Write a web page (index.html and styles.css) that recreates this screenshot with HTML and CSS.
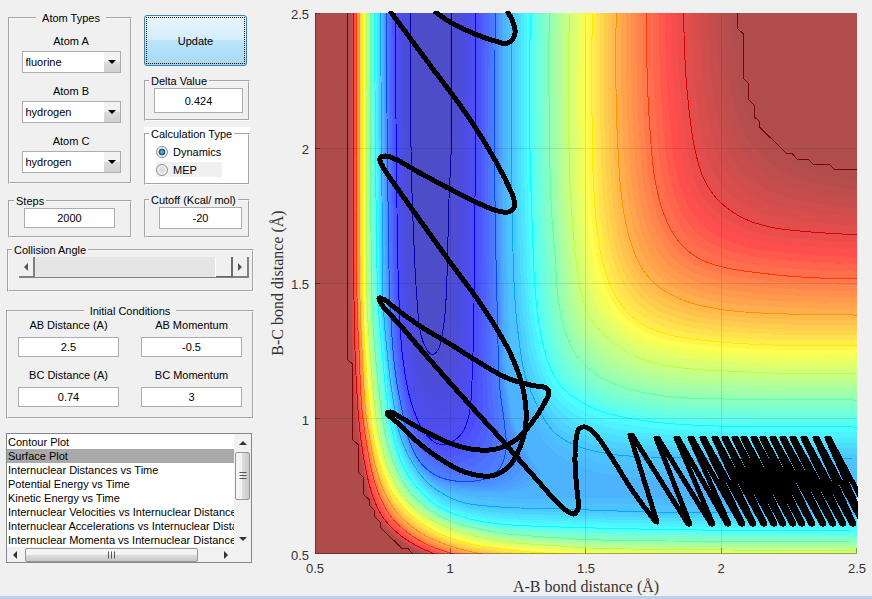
FILE: index.html
```
<!DOCTYPE html>
<html lang="en">
<head>
<meta charset="utf-8">
<title>Reaction Dynamics</title>
<link rel="stylesheet" href="styles.css">
</head>
<body>
<main class="app">
  <form class="controls" onsubmit="return false">
    <div class="top">
      <div class="col">
        <fieldset class="panel atoms">
          <legend class="centered">Atom Types</legend>
          <div class="field">
            <label for="atom-a">Atom A</label>
            <span class="combo"><select id="atom-a"><option>fluorine</option><option>hydrogen</option></select><svg viewBox="0 0 16 20"><path d="M4 8h8l-4 4z"/></svg></span>
          </div>
          <div class="field">
            <label for="atom-b">Atom B</label>
            <span class="combo"><select id="atom-b"><option>hydrogen</option><option>fluorine</option></select><svg viewBox="0 0 16 20"><path d="M4 8h8l-4 4z"/></svg></span>
          </div>
          <div class="field">
            <label for="atom-c">Atom C</label>
            <span class="combo"><select id="atom-c"><option>hydrogen</option><option>fluorine</option></select><svg viewBox="0 0 16 20"><path d="M4 8h8l-4 4z"/></svg></span>
          </div>
        </fieldset>
        <fieldset class="panel steps">
          <legend id="l-steps">Steps</legend>
          <input type="text" value="2000" aria-labelledby="l-steps">
        </fieldset>
      </div>
      <div class="col second">
        <button class="update" type="submit"><span>Update</span></button>
        <fieldset class="panel delta">
          <legend id="l-delta">Delta Value</legend>
          <input type="text" value="0.424" aria-labelledby="l-delta">
        </fieldset>
        <div class="white">
          <fieldset class="panel calc">
            <legend>Calculation Type</legend>
            <label class="radio"><input type="radio" name="calc" checked>Dynamics</label>
            <label class="radio shaded"><input type="radio" name="calc">MEP</label>
          </fieldset>
        </div>
        <fieldset class="panel cutoff">
          <legend id="l-cutoff">Cutoff (Kcal/ mol)</legend>
          <input type="text" value="-20" aria-labelledby="l-cutoff">
        </fieldset>
      </div>
    </div>
    <fieldset class="panel angle">
      <legend id="l-angle">Collision Angle</legend>
      <div class="slider">
        <button type="button" aria-label="Decrease angle"><svg viewBox="0 0 4 8"><path d="M4 0v8L0 4z"/></svg></button>
        <input type="range" min="0" max="180" value="180" aria-labelledby="l-angle">
        <button type="button" aria-label="Increase angle"><svg viewBox="0 0 4 8"><path d="M0 0v8l4-4z"/></svg></button>
      </div>
    </fieldset>
    <fieldset class="panel initial">
      <legend class="centered">Initial Conditions</legend>
      <div class="field"><label for="ab-d">AB Distance (A)</label><input id="ab-d" type="text" value="2.5"></div>
      <div class="field"><label for="ab-m">AB Momentum</label><input id="ab-m" type="text" value="-0.5"></div>
      <div class="field"><label for="bc-d">BC Distance (A)</label><input id="bc-d" type="text" value="0.74"></div>
      <div class="field"><label for="bc-m">BC Momentum</label><input id="bc-m" type="text" value="3"></div>
    </fieldset>
    <div class="list">
      <select size="8" aria-label="Plot type">
        <option>Contour Plot</option>
        <option selected>Surface Plot</option>
        <option>Internuclear Distances vs Time</option>
        <option>Potential Energy vs Time</option>
        <option>Kinetic Energy vs Time</option>
        <option>Internuclear Velocities vs Internuclear Distance</option>
        <option>Internuclear Accelerations vs Internuclear Distance</option>
        <option>Internuclear Momenta vs Internuclear Distance</option>
      </select>
      <div class="bar vertical">
        <svg class="arrow" viewBox="0 0 8 4"><path d="M4 0l4 4H0z"/></svg>
        <div class="thumb"><svg viewBox="0 0 7 8"><path d="M0 .5h7M0 3.5h7M0 6.5h7"/></svg></div>
        <svg class="arrow end" viewBox="0 0 8 4"><path d="M0 0h8L4 4z"/></svg>
      </div>
      <div class="bar horizontal">
        <svg class="arrow" viewBox="0 0 4 8"><path d="M4 0v8L0 4z"/></svg>
        <div class="thumb"><svg viewBox="0 0 8 7"><path d="M.5 0v7M3.5 0v7M6.5 0v7"/></svg></div>
        <svg class="arrow end" viewBox="0 0 4 8"><path d="M0 0v8l4-4z"/></svg>
      </div>
    </div>
  </form>
  <figure class="plot">
    <svg viewBox="262 0 610 596" role="img" aria-label="Potential energy surface with trajectory">
      <defs>
        <clipPath id="area"><rect x="315" y="13" width="542" height="541"/></clipPath>
        <clipPath id="track"><rect x="315" y="11" width="543" height="543"/></clipPath>
      </defs>
      <g clip-path="url(#area)" shape-rendering="crispEdges">
        <rect x="315" y="13" width="542" height="541" fill="#ae4c4c"/>
        <g id="surface"></g>
        <g id="lines" fill="none"></g>
        <g fill="none" stroke="#800000">
          <path d="M347.5 13V359.5L352.5 364V439.500L358.500 445V472.500L363.500 477.500V494.500L369.500 500V505.500L374.500 510.500V516.500L380.500 522.500V527.500L401.500 548H407.500L413 554"/>
          <path d="M737.500 13V28.500L743.500 34V78.500L748.500 83.500V99.500L754.500 105.500V117L759.500 121.500V127L786.500 153.500H792L797.500 159.500H808.500L813.500 164.500H829.500L834.500 169.500H857"/>
        </g>
        <path class="grid" d="M450.500 13V554M585.500 13V554M721.500 13V554M315 148.500H857M315 283.500H857M315 418.500H857"/>
      </g>
      <path class="axis" d="M315.500 13V553.500H857M450.500 553v-5M585.500 553v-5M721.500 553v-5M856.500 553v-5M315 13.500h5M315 148.500h5M315 283.500h5M315 418.500h5"/>
      <path id="trajectory" clip-path="url(#track)"/>
      <g class="ticks">
        <text x="315" y="573">0.5</text><text x="450" y="573">1</text><text x="586" y="573">1.5</text><text x="721" y="573">2</text><text x="857" y="573">2.5</text>
      </g>
      <g class="ticks side">
        <text x="309" y="19">2.5</text><text x="309" y="154">2</text><text x="309" y="289">1.5</text><text x="309" y="425">1</text><text x="309" y="560">0.5</text>
      </g>
      <text class="title" x="586" y="592">A-B bond distance (Å)</text>
      <text class="title" transform="translate(283 283) rotate(-90)">B-C bond distance (Å)</text>
    </svg>
  </figure>
</main>
<footer class="edge"></footer>
<script src="plot.js"></script>
</body>
</html>
```
FILE: styles.css
```
* { box-sizing: border-box; }
body {
  margin: 0;
  min-height: 100vh;
  display: flex;
  flex-direction: column;
  background: #f0f0f0;
  color: #000;
  font: 11px/14px "Liberation Sans", Arial, sans-serif;
}
input, select, button { font: inherit; color: inherit; margin: 0; border-radius: 0; }
.app { flex: 1; display: flex; align-items: flex-start; }
.edge { height: 3px; background: #b9d1ed; }

.controls { flex: none; width: 262px; padding: 11px 8px 0 6px; }
.top { display: grid; grid-template-columns: 124px 106px; gap: 12px; padding-left: 2px; }
.col { display: flex; flex-direction: column; }
.second { padding-top: 4px; }
.panel {
  margin: 0;
  min-width: 0;
  padding: 0 8px;
  border: 2px groove #f8f8f8;
  display: flex;
  flex-direction: column;
  align-items: center;
}
legend { padding: 0 2px; margin-left: -5px; height: 14px; }
legend.centered { margin: 0 auto; padding: 0 6px; }
input[type="text"] {
  width: 100%;
  height: 20px;
  padding: 0;
  border: 1px solid #abadb3;
  background: #fff;
  text-align: center;
}
.field { display: flex; flex-direction: column; align-items: center; gap: 3px; }
.atoms { height: 173px; padding: 9px 7px 0 9px; gap: 11px; }
.atoms .field { width: 99px; }
.combo { display: grid; width: 100%; }
.combo > * { grid-area: 1 / 1; }
.combo select {
  appearance: none;
  height: 22px;
  padding: 0 18px 0 3px;
  border: 1px solid #abadb3;
  background: #fff;
}
.combo svg {
  width: 16px;
  height: 20px;
  margin: 1px;
  justify-self: end;
  background: linear-gradient(#f2f2f2 50%, #dcdcdc 50%, #d0d0d0);
  pointer-events: none;
}
.steps { margin-top: 10px; height: 44px; padding: 0 15px 0 14px; }
.steps legend { margin-left: -10px; }
.update {
  width: 103px;
  height: 51px;
  padding: 1px;
  border: 1px solid #3c7fb1;
  border-radius: 3px;
  background: linear-gradient(#e8f5fc, #d4edfb 50%, #bce5fc 50%, #a2d8f4);
}
.update span { display: grid; place-items: center; height: 100%; border: 1px dotted #000; }
.delta { margin-top: 8px; height: 47px; padding-right: 5px; }
.delta input { height: 25px; }
.white { margin-top: 6px; background: #fff; }
.calc { height: 58px; padding-left: 10px; align-items: flex-start; }
.calc legend { margin-left: -7px; }
.radio { display: flex; align-items: center; gap: 5px; height: 15px; margin-top: 3px; }
.shaded { background: #f0f0f0; width: 66px; }
.radio input {
  appearance: none;
  width: 12px;
  height: 12px;
  border: 1px solid #8e8f8f;
  border-radius: 50%;
  background: radial-gradient(#dcdcdc 35%, #f6f6f6 60%, #b8b8b8);
}
.radio input:checked { background: radial-gradient(circle, #5cc8ec 8%, #17527c 38%, #17527c 45%, #f4f4f4 52%); }
.cutoff { margin-top: 8px; height: 45px; padding: 0 6px 0 13px; }
.cutoff legend { margin-left: -10px; }
.cutoff input { height: 22px; }

.angle { margin-top: 5px; margin-left: 1px; height: 49px; width: 247px; padding: 0 3px 0 10px; }
.angle legend { margin-left: -7px; }
.slider { display: flex; width: 100%; height: 21px; border-bottom: 1px solid #808080; }
.slider button {
  width: 16px;
  padding: 0;
  display: grid;
  place-items: center;
  background: #f0f0f0;
  border: 0 solid #808080;
  border-width: 0 2px 1px 0;
}
.slider svg { width: 4px; height: 8px; fill: #555; }
.slider input { appearance: none; flex: 1; min-width: 0; height: 20px; background: #e5e5e5; }
.slider input::-webkit-slider-thumb {
  appearance: none;
  width: 17px;
  height: 20px;
  background: #f0f0f0;
  border: solid #696969;
  border-width: 0 2px 1px 0;
  box-shadow: -1px 0 #fff;
}
.initial {
  margin-top: 12px;
  width: 248px;
  height: 115px;
  display: grid;
  grid-template-columns: 101px 101px;
  justify-content: space-between;
  padding: 0 10px;
  align-content: start;
  row-gap: 11px;
}
.initial .field { gap: 5px; }

.list {
  display: grid;
  grid-template-columns: 1fr 17px;
  grid-template-rows: 113px 15px;
  width: 246px;
  margin-top: 14px;
  border: 1px solid #828790;
  background: #f1f1f1;
}
.list select {
  min-width: 0;
  width: 100%;
  height: 113px;
  padding: 1px 0 0;
  border: 0;
  outline: 0;
  overflow: hidden;
  scrollbar-width: none;
  background: #fff;
}
.list option { padding: 1px 1px 0; height: 14px; min-height: 14px; line-height: 14px; }
.list option:checked { background: #a9a9a9 linear-gradient(#a9a9a9, #a9a9a9); color: #000; }
.bar { display: flex; align-items: center; }
.vertical { flex-direction: column; padding: 7px 0 6px; }
.horizontal { padding: 0 6px; }
.arrow { width: 8px; height: 4px; fill: #333; }
.horizontal .arrow { width: 4px; height: 8px; }
.end { margin-top: auto; }
.horizontal .end { margin: 0 0 0 auto; }
.thumb { display: grid; place-items: center; border: 1px solid #979797; border-radius: 2px; }
.vertical .thumb { width: 15px; height: 48px; margin-top: 7px; background: linear-gradient(90deg, #f4f4f4 45%, #dedede 50%, #c8c8cc); }
.horizontal .thumb { width: 173px; height: 14px; margin-left: 8px; background: linear-gradient(#f4f4f4 45%, #dedede 50%, #c8c8cc); }
.thumb svg { width: 8px; height: 8px; stroke: #555; }

.plot { flex: 1; min-width: 0; margin: 0; }
.plot svg { display: block; width: 100%; height: auto; }
.grid { stroke: #000; stroke-opacity: .1; fill: none; }
.axis { stroke: #000; stroke-opacity: .35; fill: none; }
.ticks { font-size: 13px; fill: #333; text-anchor: middle; }
.side { text-anchor: end; }
.title { font: 16px "Liberation Serif", "Times New Roman", serif; fill: #333; text-anchor: middle; }
#trajectory { fill: none; stroke: #000; stroke-width: 5; stroke-linejoin: round; shape-rendering: crispEdges; }
```
FILE: plot.js
```
// Energy contours, one polyline each; "t" is the position on the colour map.
const wall = [
  { t: 0.985, p: [350,13, 350,300, 352,350, 355,410, 358,440, 363,472, 369,499, 380,522, 396,538, 413,549, 426,555, 480,578, 857,606] },
  { t: 0.91, p: [353.5,13, 354,300, 355,350, 358,410, 361,440, 366,470, 373,497, 384,519, 400,535, 417,546, 430,552, 480,572, 857,600] },
  { t: 0.82, p: [356.5,13, 357,300, 359,350, 362,410, 366,440, 372,472, 380,497, 392,518, 408,533, 428,545, 450,553, 500,567, 857,590] },
  { t: 0.73, p: [359,13, 360,300, 362,350, 365.5,410, 370,440, 377,472, 387,497, 400,516, 418,531, 437,541, 460,549, 490,555, 857,575] },
  { t: 0.645, p: [362,13, 363,300, 365,350, 370,410, 374,440, 382,470, 393,494, 408,512, 427,527, 447,537, 475,545, 520,551, 560,554, 857,562] },
  { t: 0.557, p: [366,13, 367,300, 370,350, 374,400, 380,440, 389,470, 401,493, 418,511, 438,523, 460,532, 500,541, 560,546, 587,548, 857,551] },
  { t: 0.47, p: [370.5,13, 372,300, 375,350, 380,400, 386,438, 396,468, 410,492, 427,508, 450,521, 475,528, 500,533, 560,538, 600,540, 857,542] },
  { t: 0.38, p: [374.5,13, 376,200, 378,300, 382,350, 387,400, 393,435, 405,470, 427,498, 447,511, 470,519, 500,524, 560,527, 700,530, 857,531] },
  { t: 0.29, p: [380.5,13, 382,200, 383,300, 388,360, 394,405, 400,435, 412,462, 428,483, 447,496, 465,503, 500,507, 560,509, 655,512, 857,513] }
];
const plateau = [
  { t: 0.29, p: [512,13, 512,200, 515,300, 519,340, 525,375, 537,405, 548,425, 560,437, 580,447, 610,454, 650,457, 857,459] },
  { t: 0.38, p: [530,13, 530,150, 532,220, 536,300, 542,340, 550,367, 560,385, 575,398, 600,411, 640,420, 690,425, 857,427] },
  { t: 0.47, p: [549,13, 549,100, 551,200, 555,255, 560,310, 573,350, 587,367, 610,382, 637,391, 673,397, 727,399, 857,400] },
  { t: 0.557, p: [569,13, 569,150, 572,217, 577,267, 583,300, 593,322, 610,340, 633,355, 663,365, 693,369, 727,371, 773,373, 857,373] },
  { t: 0.645, p: [592,13, 592,117, 594,193, 600,250, 608,280, 618,300, 630,315, 647,327, 670,335, 700,340, 733,343, 773,345, 857,345] },
  { t: 0.73, p: [616,13, 616,90, 618,150, 622,200, 630,240, 643,270, 660,288, 683,300, 703,306, 733,311, 787,314, 857,315] },
  { t: 0.82, p: [646.5,13, 647,70, 650,130, 655,180, 665,217, 680,243, 700,259, 727,268, 760,273, 800,277, 857,279] },
  { t: 0.91, p: [683.5,13, 685,60, 689,110, 695,150, 703,177, 713,194, 727,208, 745,219, 770,227, 800,231, 857,235] },
  { t: 0.985, p: [731,13, 734,50, 740,90, 748,115, 759,134, 775,151, 795,164, 820,174, 857,181] }
];
const channels = [
  { t: 0.28, p: [381.5,13, 384.5,300, 395,405, 401,435, 415,465, 445,491, 500,502, 600,503, 857,504, 870,490, 857,472, 650,470, 590,460, 550,435, 530,400, 512,350, 509,300, 508,13] },
  { t: 0.268, p: [382,13, 385,300, 396,405, 402,436, 417,467, 445,490, 500,498, 600,498, 857,498, 866,488, 857,480, 650,479, 590,470, 550,448, 526,405, 510,350, 507,300, 506,13] }
];
const well = [
  { t: 0.262, p: [383,13, 386,300, 392,370, 397,405, 404,438, 418,468, 442,487, 475,492, 515,491, 540,478, 530,457, 516,430, 508,390, 504,300, 503,13] },
  { t: 0.2, p: [386,13, 388,200, 390,300, 395,370, 401,405, 409,440, 420,462, 435,475, 455,481, 475,481, 490,477, 500,468, 506,450, 504,420, 500,390, 497,300, 495,200, 495,13] },
  { t: 0.115, p: [395.5,13, 396,120, 399,300, 403,360, 412,405, 425,433, 438,444, 450,443, 462,433, 469,415, 472,380, 474,300, 475.5,100, 475.5,13] },
  { t: 0.05, p: [410.5,13, 411,150, 413,220, 417,300, 421,335, 427,350, 432,355, 438,350, 443,330, 446,300, 449,200, 451.5,140, 451.5,13] }
];

const SAMPLES = 160, BANDS = 6;

function jet(t, wash) {
  const ramp = c => Math.max(0, Math.min(1, 1.5 - Math.abs(4 * t - c)));
  const rgb = [3, 2, 1].map(c => Math.round(255 * (wash ? 0.3 + 0.7 * ramp(c) : ramp(c))));
  return `rgb(${rgb})`;
}

// Smooth a polyline, then spread samples evenly along its length.
function resample(flat, count = SAMPLES) {
  const pts = [];
  for (let i = 0; i < flat.length; i += 2) pts.push([flat[i], flat[i + 1]]);
  const fine = [];
  for (let i = 0; i < pts.length - 1; i++) {
    const b = pts[i], c = pts[i + 1];
    const a = pts[i - 1] || b, d = pts[i + 2] || c;
    const gap = (u, v) => Math.max(0.01, Math.sqrt(Math.hypot(u[0] - v[0], u[1] - v[1])));
    const ab = gap(a, b), bc = gap(b, c), cd = gap(c, d);
    const m = [0, 1].map(k => [
      c[k] - b[k] + (a === b ? 0 : bc * ((b[k] - a[k]) / ab - (c[k] - a[k]) / (ab + bc))),
      c[k] - b[k] + (d === c ? 0 : bc * ((d[k] - c[k]) / cd - (d[k] - b[k]) / (bc + cd)))
    ]);
    for (let s = 0; s < 24; s++) {
      const u = s / 24, u2 = u * u, u3 = u2 * u;
      fine.push([0, 1].map(k => (2 * u3 - 3 * u2 + 1) * b[k] + (u3 - 2 * u2 + u) * m[k][0] + (3 * u2 - 2 * u3) * c[k] + (u3 - u2) * m[k][1]));
    }
  }
  fine.push(pts[pts.length - 1]);
  const len = [0];
  for (let i = 1; i < fine.length; i++) len.push(len[i - 1] + Math.hypot(fine[i][0] - fine[i - 1][0], fine[i][1] - fine[i - 1][1]));
  const out = [];
  let j = 1;
  for (let i = 0; i <= count; i++) {
    const want = len[len.length - 1] * i / count;
    while (j < fine.length - 1 && len[j] < want) j++;
    const f = (want - len[j - 1]) / (len[j] - len[j - 1]);
    out.push([0, 1].map(k => fine[j - 1][k] + f * (fine[j][k] - fine[j - 1][k])));
  }
  return out;
}

const path = pts => "M" + pts.map(p => p[0].toFixed(1) + " " + p[1].toFixed(1)).join("L");
let fills = "", strokes = "";

function paint(pts, t, open) {
  fills += `<path d="${path(pts)}${open ? "V0" : "H900V0"}Z" fill="${jet(t, true)}"/>`;
}
function family(levels, open) {
  const sets = levels.map(l => resample(l.p));
  for (let i = 0; i < sets.length - 1; i++) {
    for (let b = 0; b < BANDS; b++) {
      const f = b / BANDS;
      const mix = sets[i].map((p, n) => [0, 1].map(k => p[k] + f * (sets[i + 1][n][k] - p[k])));
      paint(mix, levels[i].t + (f + 0.5 / BANDS) * (levels[i + 1].t - levels[i].t), open);
    }
  }
  const last = levels.length - 1;
  paint(sets[last], levels[last].t, open);
  levels.forEach((l, i) => {
    if (l.t !== 0.985 && l.t !== 0.262) strokes += `<path d="${path(sets[i])}" stroke="${jet(l.t, false)}"/>`;
  });
}

family(wall, false);
family(plateau, false);
channels.forEach(c => paint(resample(c.p), c.t, true));
family(well, true);
document.getElementById("surface").innerHTML = fills;
document.getElementById("lines").innerHTML = strokes;

// Trajectory: the outgoing part, the collision, and the incoming vibration.
const outgoing = [434,11, 450,22, 475,34, 495,41, 505,43.5, 511,41, 515,33, 513,22, 507,11];
const collision = [390,11, 430,65, 460,105, 480,135, 495,160, 508,185, 514,200, 514,208, 508,212, 498,211, 480,204, 450,189, 420,173, 395,159, 385,156, 380,158, 383,167, 400,192, 450,262, 478,300, 498,331, 512,357, 522,385, 526,410, 525,430, 518,452, 508,467, 495,475, 483,476, 465,472, 445,462, 420,444, 400,425, 387,413, 390,412, 400,417, 430,434, 455,445, 480,450, 500,448, 518,438, 533,421, 545,402, 549,392, 546,388, 530,385, 505,377, 477,361, 450,344, 420,326, 395,308, 385,300, 379,298, 382,305, 400,325, 430,360, 470,405, 500,438, 530,472, 555,500, 567,511, 574,514, 578,509, 577,490, 575,465, 576,440, 579,429, 585,427, 594,433, 610,455, 630,487, 645,508, 655,521];
const tops = [631, 657, 677, 691, 703, 715, 725, 735, 744, 754, 763, 773, 783, 793, 804, 816, 828];
const bottoms = [689, 712, 728, 742, 753, 764, 774, 783, 793, 802, 812, 823, 833, 843, 853, 864, 876];
let d = path(resample(outgoing)) + path(resample(collision, 1200)) + "L657 522";
tops.forEach((x, i) => {
  const y = i ? 438 : 435;
  d += `L${x - 1} ${y}L${x + 1} ${y}L${bottoms[i] - 1} 524L${bottoms[i] + 1} 524`;
});
document.getElementById("trajectory").setAttribute("d", d);
```
